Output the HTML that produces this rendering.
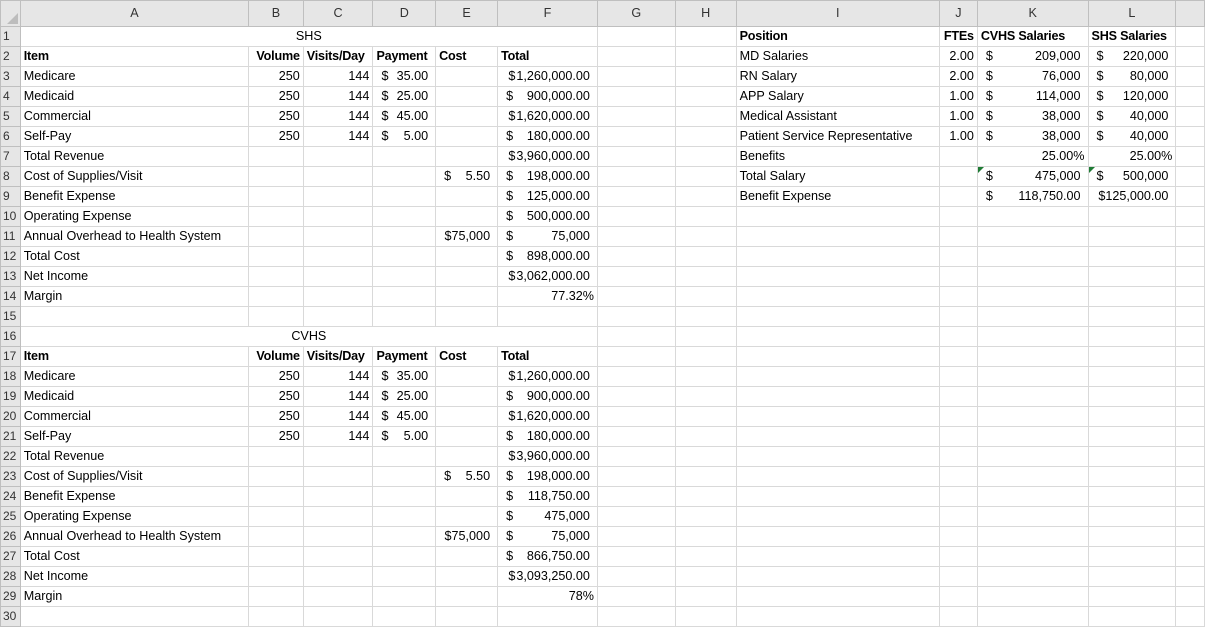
<!DOCTYPE html>
<html><head><meta charset="utf-8"><style>
body{margin:0;background:#fff;width:1205px;height:614px;overflow:hidden;font-family:"Liberation Sans",sans-serif;font-size:12.6px;color:#000}
table{border-collapse:collapse;table-layout:fixed;position:absolute;left:0;top:0}
td{height:20px;padding:0 3px;border:1px solid #d9d9d9;white-space:nowrap;overflow:visible;line-height:19px;box-sizing:border-box}
tr.h td{height:26px;background:#e6e6e6;border-color:#bfbfbf;text-align:center;color:#333;font-size:12.6px}
td.rn{background:#e6e6e6;border-color:#bfbfbf;color:#333;padding:0 0 0 2px;font-size:12px}
.r{text-align:right}
.c{text-align:center}
b{font-weight:bold;letter-spacing:-0.2px}
td.a{padding:0 7px 0 8px;text-align:right}
td.a s{float:left;text-decoration:none}
.tri{position:relative}
.tri:before{content:"";position:absolute;left:0;top:0;border-top:6px solid #1e7b34;border-right:6px solid transparent}
</style></head><body>
<table>
<colgroup><col style="width:20px"><col style="width:230px"><col style="width:55px"><col style="width:70px"><col style="width:63px"><col style="width:62px"><col style="width:100px"><col style="width:82px"><col style="width:64px"><col style="width:205px"><col style="width:38px"><col style="width:112px"><col style="width:88px"><col style="width:30px"></colgroup>
<tr class="h"><td style="position:relative"><div style="position:absolute;right:2px;bottom:2px;border-bottom:11px solid #bdbdbd;border-left:11px solid transparent"></div></td><td>A</td><td>B</td><td>C</td><td>D</td><td>E</td><td>F</td><td>G</td><td>H</td><td>I</td><td>J</td><td>K</td><td>L</td><td></td></tr>
<tr><td class="rn">1</td><td colspan="6" class="c">SHS</td><td></td><td></td><td><b>Position</b></td><td class="r"><b>FTEs</b></td><td><b>CVHS Salaries</b></td><td><b>SHS Salaries</b></td><td></td></tr>
<tr><td class="rn">2</td><td><b>Item</b></td><td class="r"><b>Volume</b></td><td><b>Visits/Day</b></td><td><b>Payment</b></td><td><b>Cost</b></td><td><b>Total</b></td><td></td><td></td><td>MD Salaries</td><td class="r">2.00</td><td class="a"><s>$</s>209,000</td><td class="a"><s>$</s>220,000</td><td></td></tr>
<tr><td class="rn">3</td><td>Medicare</td><td class="r">250</td><td class="r">144</td><td class="a"><s>$</s>35.00</td><td></td><td class="a">$&#8202;1,260,000.00</td><td></td><td></td><td>RN Salary</td><td class="r">2.00</td><td class="a"><s>$</s>76,000</td><td class="a"><s>$</s>80,000</td><td></td></tr>
<tr><td class="rn">4</td><td>Medicaid</td><td class="r">250</td><td class="r">144</td><td class="a"><s>$</s>25.00</td><td></td><td class="a"><s>$</s>900,000.00</td><td></td><td></td><td>APP Salary</td><td class="r">1.00</td><td class="a"><s>$</s>114,000</td><td class="a"><s>$</s>120,000</td><td></td></tr>
<tr><td class="rn">5</td><td>Commercial</td><td class="r">250</td><td class="r">144</td><td class="a"><s>$</s>45.00</td><td></td><td class="a">$&#8202;1,620,000.00</td><td></td><td></td><td>Medical Assistant</td><td class="r">1.00</td><td class="a"><s>$</s>38,000</td><td class="a"><s>$</s>40,000</td><td></td></tr>
<tr><td class="rn">6</td><td>Self-Pay</td><td class="r">250</td><td class="r">144</td><td class="a"><s>$</s>5.00</td><td></td><td class="a"><s>$</s>180,000.00</td><td></td><td></td><td>Patient Service Representative</td><td class="r">1.00</td><td class="a"><s>$</s>38,000</td><td class="a"><s>$</s>40,000</td><td></td></tr>
<tr><td class="rn">7</td><td>Total Revenue</td><td></td><td></td><td></td><td></td><td class="a">$&#8202;3,960,000.00</td><td></td><td></td><td>Benefits</td><td></td><td class="r">25.00%</td><td class="r">25.00%</td><td></td></tr>
<tr><td class="rn">8</td><td>Cost of Supplies/Visit</td><td></td><td></td><td></td><td class="a"><s>$</s>5.50</td><td class="a"><s>$</s>198,000.00</td><td></td><td></td><td>Total Salary</td><td></td><td class="a tri"><s>$</s>475,000</td><td class="a tri"><s>$</s>500,000</td><td></td></tr>
<tr><td class="rn">9</td><td>Benefit Expense</td><td></td><td></td><td></td><td></td><td class="a"><s>$</s>125,000.00</td><td></td><td></td><td>Benefit Expense</td><td></td><td class="a"><s>$</s>118,750.00</td><td class="a">$125,000.00</td><td></td></tr>
<tr><td class="rn">10</td><td>Operating Expense</td><td></td><td></td><td></td><td></td><td class="a"><s>$</s>500,000.00</td><td></td><td></td><td></td><td></td><td></td><td></td><td></td></tr>
<tr><td class="rn">11</td><td>Annual Overhead to Health System</td><td></td><td></td><td></td><td class="a">$75,000</td><td class="a"><s>$</s>75,000</td><td></td><td></td><td></td><td></td><td></td><td></td><td></td></tr>
<tr><td class="rn">12</td><td>Total Cost</td><td></td><td></td><td></td><td></td><td class="a"><s>$</s>898,000.00</td><td></td><td></td><td></td><td></td><td></td><td></td><td></td></tr>
<tr><td class="rn">13</td><td>Net Income</td><td></td><td></td><td></td><td></td><td class="a">$&#8202;3,062,000.00</td><td></td><td></td><td></td><td></td><td></td><td></td><td></td></tr>
<tr><td class="rn">14</td><td>Margin</td><td></td><td></td><td></td><td></td><td class="r">77.32%</td><td></td><td></td><td></td><td></td><td></td><td></td><td></td></tr>
<tr><td class="rn">15</td><td></td><td></td><td></td><td></td><td></td><td></td><td></td><td></td><td></td><td></td><td></td><td></td><td></td></tr>
<tr><td class="rn">16</td><td colspan="6" class="c">CVHS</td><td></td><td></td><td></td><td></td><td></td><td></td><td></td></tr>
<tr><td class="rn">17</td><td><b>Item</b></td><td class="r"><b>Volume</b></td><td><b>Visits/Day</b></td><td><b>Payment</b></td><td><b>Cost</b></td><td><b>Total</b></td><td></td><td></td><td></td><td></td><td></td><td></td><td></td></tr>
<tr><td class="rn">18</td><td>Medicare</td><td class="r">250</td><td class="r">144</td><td class="a"><s>$</s>35.00</td><td></td><td class="a">$&#8202;1,260,000.00</td><td></td><td></td><td></td><td></td><td></td><td></td><td></td></tr>
<tr><td class="rn">19</td><td>Medicaid</td><td class="r">250</td><td class="r">144</td><td class="a"><s>$</s>25.00</td><td></td><td class="a"><s>$</s>900,000.00</td><td></td><td></td><td></td><td></td><td></td><td></td><td></td></tr>
<tr><td class="rn">20</td><td>Commercial</td><td class="r">250</td><td class="r">144</td><td class="a"><s>$</s>45.00</td><td></td><td class="a">$&#8202;1,620,000.00</td><td></td><td></td><td></td><td></td><td></td><td></td><td></td></tr>
<tr><td class="rn">21</td><td>Self-Pay</td><td class="r">250</td><td class="r">144</td><td class="a"><s>$</s>5.00</td><td></td><td class="a"><s>$</s>180,000.00</td><td></td><td></td><td></td><td></td><td></td><td></td><td></td></tr>
<tr><td class="rn">22</td><td>Total Revenue</td><td></td><td></td><td></td><td></td><td class="a">$&#8202;3,960,000.00</td><td></td><td></td><td></td><td></td><td></td><td></td><td></td></tr>
<tr><td class="rn">23</td><td>Cost of Supplies/Visit</td><td></td><td></td><td></td><td class="a"><s>$</s>5.50</td><td class="a"><s>$</s>198,000.00</td><td></td><td></td><td></td><td></td><td></td><td></td><td></td></tr>
<tr><td class="rn">24</td><td>Benefit Expense</td><td></td><td></td><td></td><td></td><td class="a"><s>$</s>118,750.00</td><td></td><td></td><td></td><td></td><td></td><td></td><td></td></tr>
<tr><td class="rn">25</td><td>Operating Expense</td><td></td><td></td><td></td><td></td><td class="a"><s>$</s>475,000</td><td></td><td></td><td></td><td></td><td></td><td></td><td></td></tr>
<tr><td class="rn">26</td><td>Annual Overhead to Health System</td><td></td><td></td><td></td><td class="a">$75,000</td><td class="a"><s>$</s>75,000</td><td></td><td></td><td></td><td></td><td></td><td></td><td></td></tr>
<tr><td class="rn">27</td><td>Total Cost</td><td></td><td></td><td></td><td></td><td class="a"><s>$</s>866,750.00</td><td></td><td></td><td></td><td></td><td></td><td></td><td></td></tr>
<tr><td class="rn">28</td><td>Net Income</td><td></td><td></td><td></td><td></td><td class="a">$&#8202;3,093,250.00</td><td></td><td></td><td></td><td></td><td></td><td></td><td></td></tr>
<tr><td class="rn">29</td><td>Margin</td><td></td><td></td><td></td><td></td><td class="r">78%</td><td></td><td></td><td></td><td></td><td></td><td></td><td></td></tr>
<tr><td class="rn">30</td><td></td><td></td><td></td><td></td><td></td><td></td><td></td><td></td><td></td><td></td><td></td><td></td><td></td></tr>
</table>
</body></html>
